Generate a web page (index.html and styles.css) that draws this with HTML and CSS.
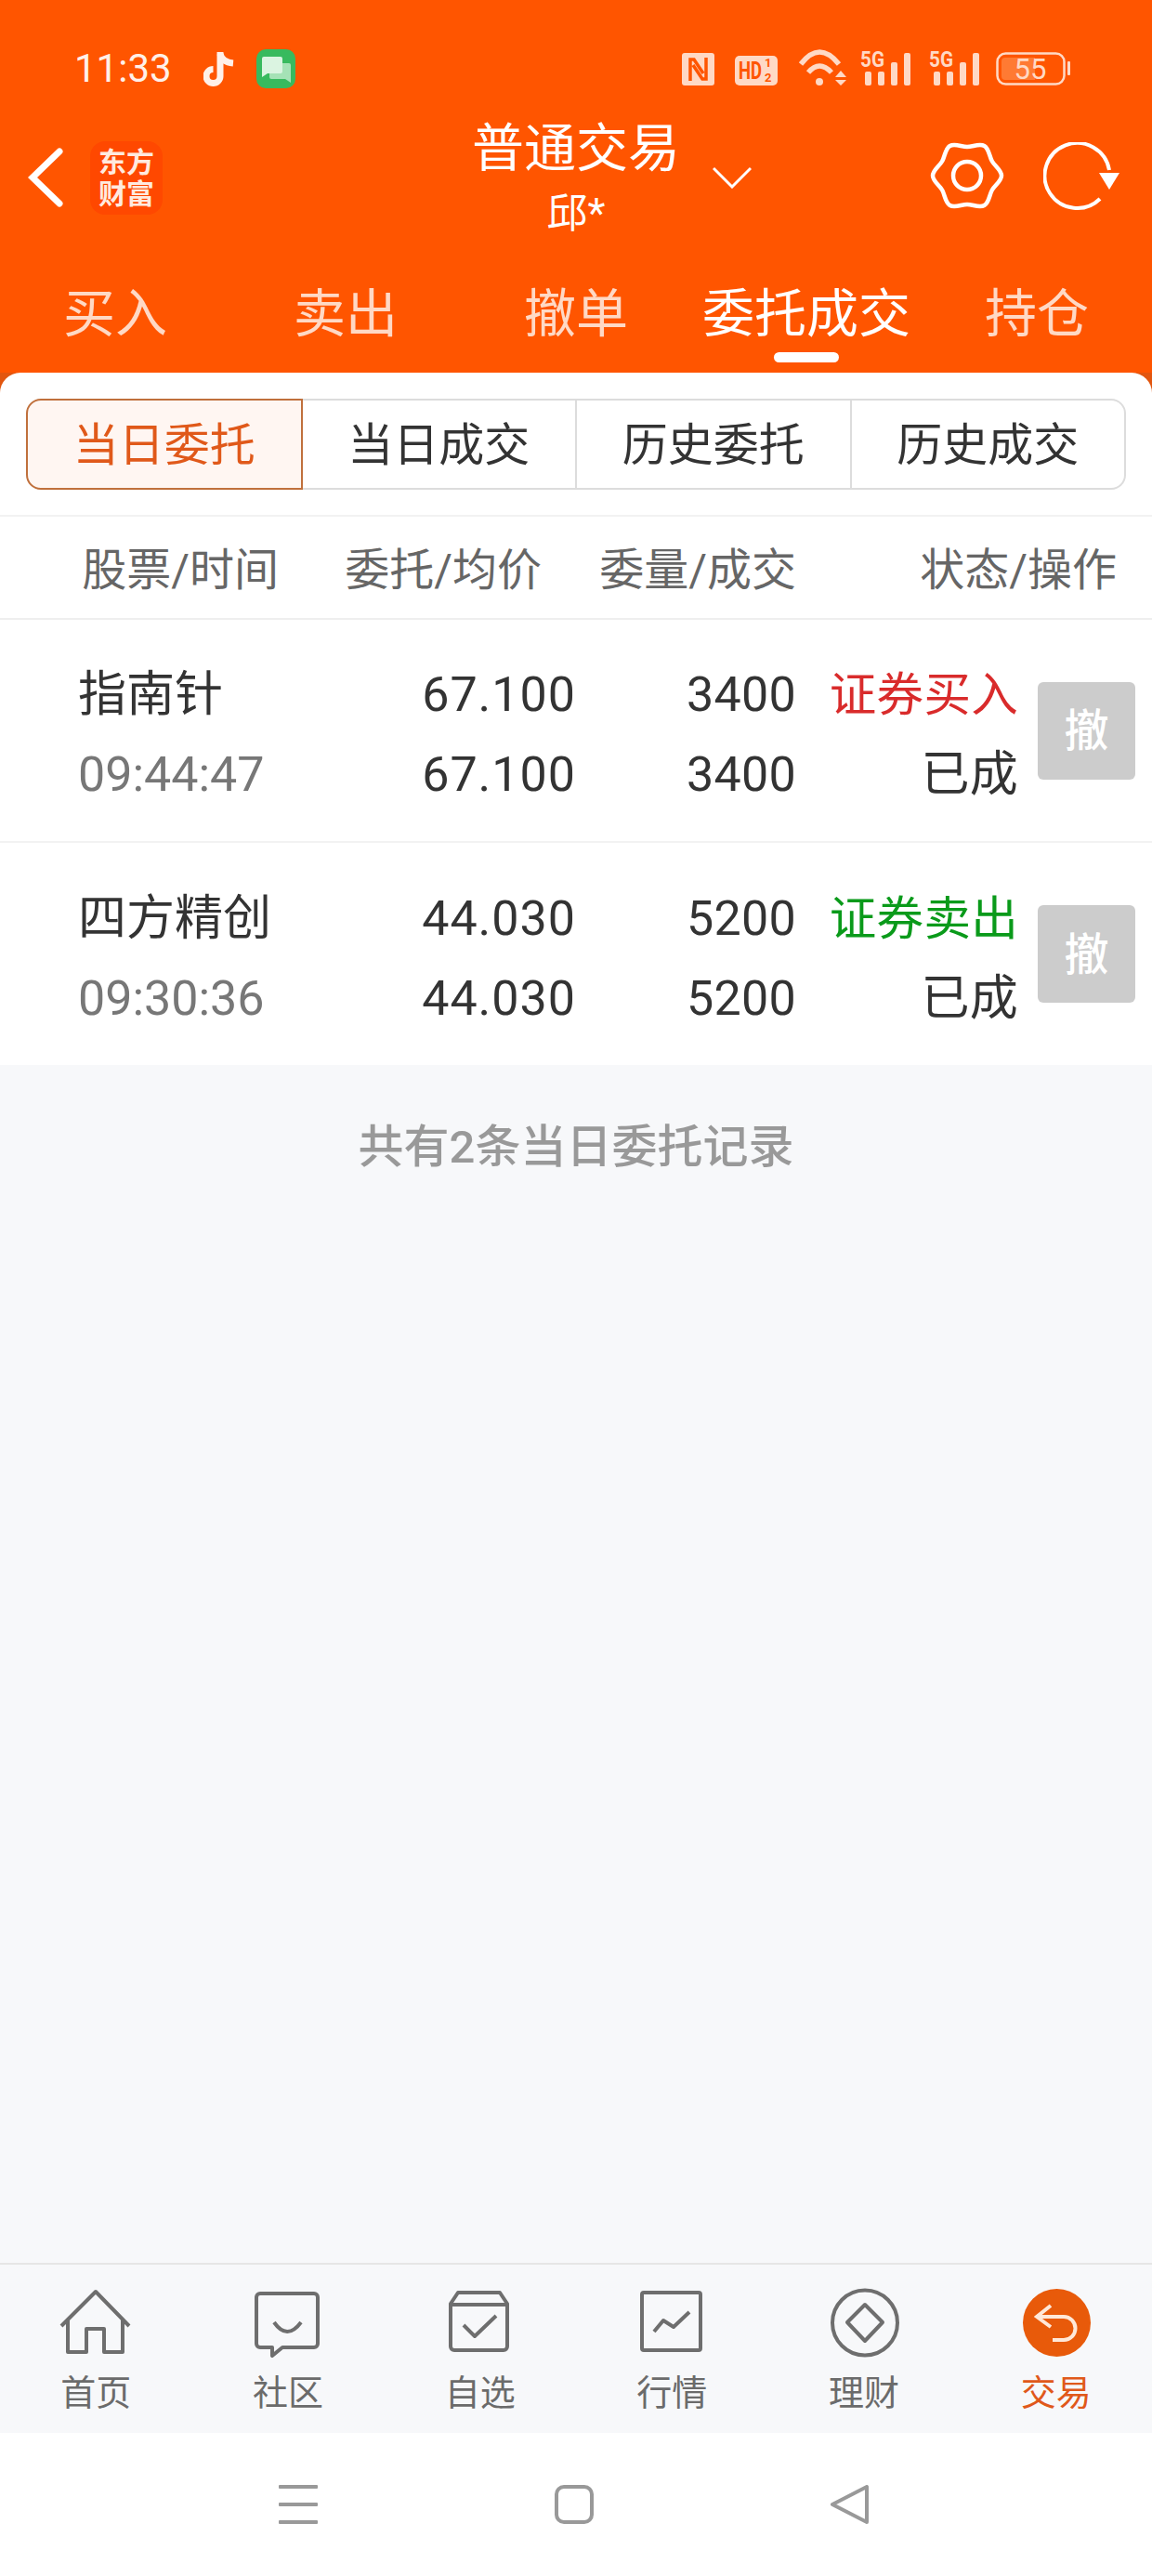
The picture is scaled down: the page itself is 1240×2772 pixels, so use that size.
FILE: index.html
```html
<!DOCTYPE html>
<html lang="zh-CN">
<head>
    <meta charset="UTF-8">
    <meta name="viewport" content="width=device-width, initial-scale=1.0">
    <title>普通交易</title>
    <link rel="stylesheet" href="styles.css">
</head>
<body>
    <header class="top">
        <div class="status">
            <span class="clock">11:33</span>
            <svg class="st-tiktok" width="34" height="38" viewBox="0 0 34 38" fill="none" stroke="#fff0e8" stroke-width="7">
                <path d="M18 1V27a7.5 7.5 0 1 1-7.500-7.500"/>
                <path d="M18 3Q20 12 32 13"/>
            </svg>
            <svg class="st-msg" width="42" height="42" viewBox="0 0 42 42">
                <rect width="42" height="42" rx="10" fill="#38ba5e"/>
                <path d="M16 15H35a2 2 0 0 1 2 2V36l-6-4H16a2 2 0 0 1-2-2V17a2 2 0 0 1 2-2z" fill="#a5e2b6"/>
                <path d="M8 8H26a2 2 0 0 1 2 2V24a2 2 0 0 1-2 2H12l-6 4V10a2 2 0 0 1 2-2z" fill="#dbf4e1"/>
            </svg>
            <div class="status-right">
                <svg width="35" height="35" viewBox="0 0 35 35">
                    <rect width="35" height="35" rx="3" fill="#ffd9c5"/>
                    <path d="M9 30V7H13L23 22M26 5V28H22L12 13" fill="none" stroke="#ff5500" stroke-width="3.500"/>
                </svg>
                <svg width="46" height="32" viewBox="0 0 46 32">
                    <rect width="46" height="32" rx="5" fill="#ffd9c5"/>
                    <text class="st-hd" transform="translate(4 25) scale(.74 1)">HD</text>
                    <text class="st-half" x="32" y="12">1</text>
                    <text class="st-half" x="32" y="28">2</text>
                </svg>
                <svg width="52" height="39" viewBox="0 0 52 39" fill="none" stroke="#ffd9c5" stroke-width="5.500">
                    <path d="M3 16Q23-10 44 16M11 25Q23 11 36 25"/>
                    <circle cx="23" cy="35" r="4" fill="#ffd9c5" stroke="none"/>
                    <path d="M40 30L46 23L52 30ZM40 33H52L46 39Z" fill="#ffd9c5" stroke="none"/>
                </svg>
                <svg width="55" height="44" viewBox="0 0 55 44" fill="#ffd9c5">
                    <text class="st-5g" x="0" y="24" textLength="26" lengthAdjust="spacingAndGlyphs">5G</text>
                    <rect x="5" y="29" width="7" height="15" rx="2"/>
                    <rect x="19" y="29" width="7" height="15" rx="2"/>
                    <rect x="33" y="19" width="7" height="25" rx="2"/>
                    <rect x="47" y="9" width="7" height="35" rx="2"/>
                </svg>
                <svg width="55" height="44" viewBox="0 0 55 44" fill="#ffd9c5">
                    <text class="st-5g" x="0" y="24" textLength="26" lengthAdjust="spacingAndGlyphs">5G</text>
                    <rect x="5" y="29" width="7" height="15" rx="2"/>
                    <rect x="19" y="29" width="7" height="15" rx="2"/>
                    <rect x="33" y="19" width="7" height="25" rx="2"/>
                    <rect x="47" y="9" width="7" height="35" rx="2"/>
                </svg>
                <svg width="80" height="36" viewBox="0 0 80 36">
                    <path d="M10 6H42V30H10a4 4 0 0 1-4-4V10a4 4 0 0 1 4-4z" fill="#ff7a33"/>
                    <rect x="1.500" y="1.500" width="72" height="33" rx="9" fill="none" stroke="#ffd9c5" stroke-width="2.500"/>
                    <rect x="77" y="10" width="3" height="15" rx="1" fill="#ffd9c5"/>
                    <text class="st-batt" x="37" y="29" text-anchor="middle">55</text>
                </svg>
            </div>
        </div>

        <div class="titlebar">
            <div class="title-left">
                <svg width="38" height="64" viewBox="0 0 38 64" fill="none" stroke="#fff" stroke-width="7" stroke-linecap="round">
                    <path d="M34 4L5 32L34 60"/>
                </svg>
                <div class="logo">东方<br>财富</div>
            </div>
            <div class="title-mid">
                <div class="title-main">普通交易</div>
                <div class="title-sub">邱*</div>
            </div>
            <div class="title-right">
                <svg class="drop" width="42" height="24" viewBox="0 0 42 24" fill="none" stroke="#fff" stroke-width="3">
                    <path d="M1 2L21 22L41 2"/>
                </svg>
                <svg class="gear" width="80" height="80" viewBox="0 0 80 80" fill="none" stroke="#fff" stroke-width="4.500">
                    <path d="M77 40C77 46 69.850 50.300 66.850 55.500C63.850 60.700 63.700 69.040 58.500 72.040C53.300 75.040 46 71 40 71C34 71 26.700 75.040 21.500 72.040C16.300 69.040 16.150 60.700 13.150 55.500C10.150 50.300 3 46 3 40C3 34 10.150 29.700 13.150 24.500C16.150 19.300 16.300 10.960 21.500 7.960C26.700 4.960 34 9 40 9C46 9 53.300 4.960 58.500 7.960C63.700 10.960 63.850 19.300 66.850 24.500C69.850 29.700 77 34 77 40Z"/>
                    <circle cx="40" cy="40" r="15"/>
                </svg>
                <svg class="refresh" width="82" height="76" viewBox="0 0 82 76">
                    <path d="M71 30A35 35 0 1 0 61 61" fill="none" stroke="#fff" stroke-width="4"/>
                    <path d="M60 33H82L71 51Z" fill="#fff"/>
                </svg>
            </div>
        </div>

        <nav class="tabs">
            <div class="tab">买入</div>
            <div class="tab">卖出</div>
            <div class="tab">撤单</div>
            <div class="tab tab-on">委托成交<span class="tab-bar"></span></div>
            <div class="tab">持仓</div>
        </nav>
    </header>

    <main class="wrap">
        <div class="card-back">
            <section class="card">
                <div class="seg">
                    <div class="seg-item seg-on">当日委托</div>
                    <div class="seg-item">当日成交</div>
                    <div class="seg-item">历史委托</div>
                    <div class="seg-item">历史成交</div>
                </div>
                <div class="thead">
                    <span>股票/时间</span>
                    <span>委托/均价</span>
                    <span>委量/成交</span>
                    <span>状态/操作</span>
                </div>
                <div class="row">
                    <div class="cell">
                        <div>指南针</div>
                        <div class="time">09:44:47</div>
                    </div>
                    <div class="cell num price">
                        <div>67.100</div>
                        <div>67.100</div>
                    </div>
                    <div class="cell num">
                        <div>3400</div>
                        <div>3400</div>
                    </div>
                    <div class="cell num">
                        <div class="buy">证券买入</div>
                        <div>已成</div>
                    </div>
                    <button class="cancel">撤</button>
                </div>
                <div class="row">
                    <div class="cell">
                        <div>四方精创</div>
                        <div class="time">09:30:36</div>
                    </div>
                    <div class="cell num price">
                        <div>44.030</div>
                        <div>44.030</div>
                    </div>
                    <div class="cell num">
                        <div>5200</div>
                        <div>5200</div>
                    </div>
                    <div class="cell num">
                        <div class="sell">证券卖出</div>
                        <div>已成</div>
                    </div>
                    <button class="cancel">撤</button>
                </div>
            </section>
        </div>
        <p class="total">共有2条当日委托记录</p>
    </main>

    <nav class="bottom">
        <div class="nav-item">
            <svg class="nav-icon" width="84" height="84" viewBox="0 0 84 84">
                <path d="M5 46L42 9L78 46M12 38V74H32V49H51V74H71V38"/>
            </svg>
            <span>首页</span>
        </div>
        <div class="nav-item">
            <svg class="nav-icon" width="84" height="84" viewBox="0 0 84 84">
                <path d="M12 11H70a4 4 0 0 1 4 4V65a4 4 0 0 1-4 4H36L25 78V69H12a4 4 0 0 1-4-4V15a4 4 0 0 1 4-4zM27 42q14 20 29 0"/>
            </svg>
            <span>社区</span>
        </div>
        <div class="nav-item">
            <svg class="nav-icon" width="84" height="84" viewBox="0 0 84 84">
                <path d="M10 22L18 10H63L71 22V68a4 4 0 0 1-4 4H14a4 4 0 0 1-4-4ZM10 23H71M24 45L36 57L59 35"/>
            </svg>
            <span>自选</span>
        </div>
        <div class="nav-item">
            <svg class="nav-icon" width="84" height="84" viewBox="0 0 84 84">
                <path d="M12 10H71a2 2 0 0 1 2 2V70a2 2 0 0 1-2 2H12a2 2 0 0 1-2-2V12a2 2 0 0 1 2-2zM23 52L33 40L44 47L61 31"/>
            </svg>
            <span>行情</span>
        </div>
        <div class="nav-item">
            <svg class="nav-icon" width="84" height="84" viewBox="0 0 84 84">
                <circle cx="43" cy="42.500" r="35"/>
                <path d="M43 23L62 42L43 62L24 42Z"/>
            </svg>
            <span>理财</span>
        </div>
        <div class="nav-item nav-on">
            <svg width="84" height="84" viewBox="0 0 84 84" fill="none" stroke="#ffe8d8" stroke-width="4">
                <circle cx="42.500" cy="42.500" r="36.500" fill="#e85a0a" stroke="none"/>
                <path d="M36 24L21 36L36 47M21 36H50a12.500 12.500 0 0 1 0 25H38"/>
            </svg>
            <span>交易</span>
        </div>
    </nav>

    <div class="sysbar">
        <svg width="42" height="42" viewBox="0 0 42 42" fill="#999">
            <rect y="0" width="42" height="4" rx="1"/>
            <rect y="19" width="42" height="4" rx="1"/>
            <rect y="38" width="42" height="4" rx="1"/>
        </svg>
        <svg width="42" height="42" viewBox="0 0 42 42" fill="none" stroke="#999" stroke-width="4">
            <rect x="2" y="2" width="38" height="38" rx="8"/>
        </svg>
        <svg width="42" height="42" viewBox="0 0 42 42" fill="none" stroke="#999" stroke-width="4" stroke-linejoin="round">
            <path d="M39 2V40L2 21Z"/>
        </svg>
    </div>
</body>
</html>
```

FILE: styles.css
```css
/* Reset */
* {
    box-sizing: border-box;
    margin: 0;
    padding: 0;
}

html, body {
    width: 1240px;
    height: 2772px;
    overflow: hidden;
}

body {
    display: flex;
    flex-direction: column;
    font-family: Roboto, "Noto Sans CJK SC", sans-serif;
    background-color: #fff;
    color: #333;
}

svg {
    display: block;
    flex: none;
}

/* Header */
.top {
    height: 401px;
    flex: none;
    background-color: #ff5500;
    color: #fff;
    padding-top: 53px;
}

.status {
    display: flex;
    align-items: center;
    height: 42px;
    padding: 0 88px 0 80px;
}

.clock {
    font-size: 42px;
    line-height: 42px;
    color: #fff0e8;
}

.st-tiktok {
    margin-left: 34px;
}

.st-msg {
    margin-left: 23px;
}

.status-right {
    display: flex;
    align-items: flex-end;
    align-self: flex-end;
    margin-left: auto;
    margin-bottom: 3px;
}

.status-right svg:nth-child(2),
.status-right svg:nth-child(3) {
    margin-left: 22px;
}

.status-right svg:nth-child(4) {
    margin-left: 15px;
}

.status-right svg:nth-child(5) {
    margin-left: 19px;
}

.status-right svg:nth-child(6) {
    margin-left: 17px;
}

.st-hd {
    font-size: 25px;
    font-weight: 700;
    fill: #ff5500;
}

.st-half {
    font-size: 13px;
    font-weight: 700;
    fill: #ff5500;
}

.st-5g {
    font-size: 24px;
    font-weight: 700;
}

.st-batt {
    font-size: 31px;
    fill: #ffd9c5;
}

.titlebar {
    display: grid;
    grid-template-columns: 1fr 224px 1fr;
    height: 124px;
    margin-top: 33px;
}

.title-left {
    display: flex;
    align-items: center;
    padding-left: 30px;
}

.logo {
    width: 78px;
    height: 79px;
    margin-left: 29px;
    border-radius: 16px;
    background-color: #ff4800;
    font-size: 30px;
    font-weight: 700;
    line-height: 34px;
    padding-top: 6px;
    text-align: center;
    color: #ffeadf;
}

.title-mid {
    text-align: center;
    white-space: nowrap;
}

.title-main {
    font-size: 56px;
    line-height: 64px;
}

.title-sub {
    font-size: 44px;
    line-height: 48px;
    margin-top: 14px;
}

.title-right {
    display: flex;
    align-items: center;
    padding-right: 35px;
}

.drop {
    margin-left: 35px;
}

.gear {
    margin-left: auto;
    margin-right: 42px;
    margin-bottom: 4px;
}

.tabs {
    display: grid;
    grid-template-columns: repeat(5, 1fr);
    padding-top: 58px;
}

.tab {
    font-size: 56px;
    line-height: 56px;
    text-align: center;
    color: #ffd9c5;
}

.tab-on {
    color: #fff;
}

.tab-bar {
    display: block;
    width: 70px;
    height: 11px;
    margin: 13px auto 0;
    border-radius: 6px;
    background-color: #fff;
}

/* Content */
.wrap {
    flex: 1;
    display: flex;
    flex-direction: column;
    background-color: #f7f8fa;
}

.card-back {
    background-color: #e2560f;
}

.card {
    background-color: #fff;
    border-radius: 22px 22px 0 0;
}

.seg {
    display: flex;
    margin: 0 28px;
    padding: 28px 0 27px;
}

.seg-item {
    flex: 1;
    height: 98px;
    padding-top: 4px;
    border: 2px solid #dcdcdc;
    border-left: none;
    font-size: 49px;
    line-height: 90px;
    text-align: center;
    color: #333;
}

.seg-item:last-child {
    border-radius: 0 16px 16px 0;
}

.seg-on {
    border: 2px solid #c0703c;
    border-radius: 16px 0 0 16px;
    background-color: #fff6f2;
    color: #e0591a;
}

.thead {
    display: grid;
    grid-template-columns: 300px 283px 274px 345px;
    height: 113px;
    padding-top: 5px;
    border-top: 2px solid #f2f2f2;
    border-bottom: 2px solid #eeeeee;
    font-size: 48px;
    line-height: 105px;
    color: #666;
    text-align: right;
}

.row {
    display: grid;
    grid-template-columns: 266px 270px 237px 239px 105px;
    align-items: center;
    height: 240px;
    padding-left: 84px;
    border-bottom: 2px solid #f2f2f2;
    font-size: 52px;
    line-height: 86px;
}

.row:last-child {
    height: 239px;
    border-bottom: none;
}

.cell {
    padding-top: 10px;
    white-space: nowrap;
}

.num {
    text-align: right;
    letter-spacing: .3px;
}

.price {
    letter-spacing: 1px;
}

.time {
    color: #777;
}

.buy {
    font-size: 50.500px;
    color: #d92b2b;
}

.sell {
    font-size: 50.500px;
    color: #0a9a1a;
}

.cancel {
    width: 105px;
    height: 105px;
    margin-left: 21px;
    padding-bottom: 8px;
    border: none;
    border-radius: 6px;
    background-color: #cccccc;
    color: #fff;
    font-family: inherit;
    font-size: 48px;
    font-weight: 500;
}

.total {
    padding-top: 59px;
    font-size: 49px;
    font-weight: 500;
    line-height: 60px;
    text-align: center;
    color: #999;
}

/* Bottom nav */
.bottom {
    display: grid;
    grid-template-columns: repeat(6, 1fr);
    flex: none;
    height: 183px;
    padding-top: 20px;
    border-top: 2px solid #e6e6e6;
    background-color: #f7f8fa;
}

.nav-item {
    display: flex;
    flex-direction: column;
    align-items: center;
    font-size: 38px;
    line-height: 44px;
    color: #6b6b6b;
}

.nav-item span {
    margin-top: 12px;
}

.nav-icon {
    fill: none;
    stroke: #6e6e6e;
    stroke-width: 4;
    stroke-linejoin: round;
}

.nav-on {
    color: #e0591a;
}

.sysbar {
    display: flex;
    align-items: center;
    flex: none;
    gap: 255px;
    height: 154px;
    padding-left: 300px;
    background-color: #fff;
}
```
